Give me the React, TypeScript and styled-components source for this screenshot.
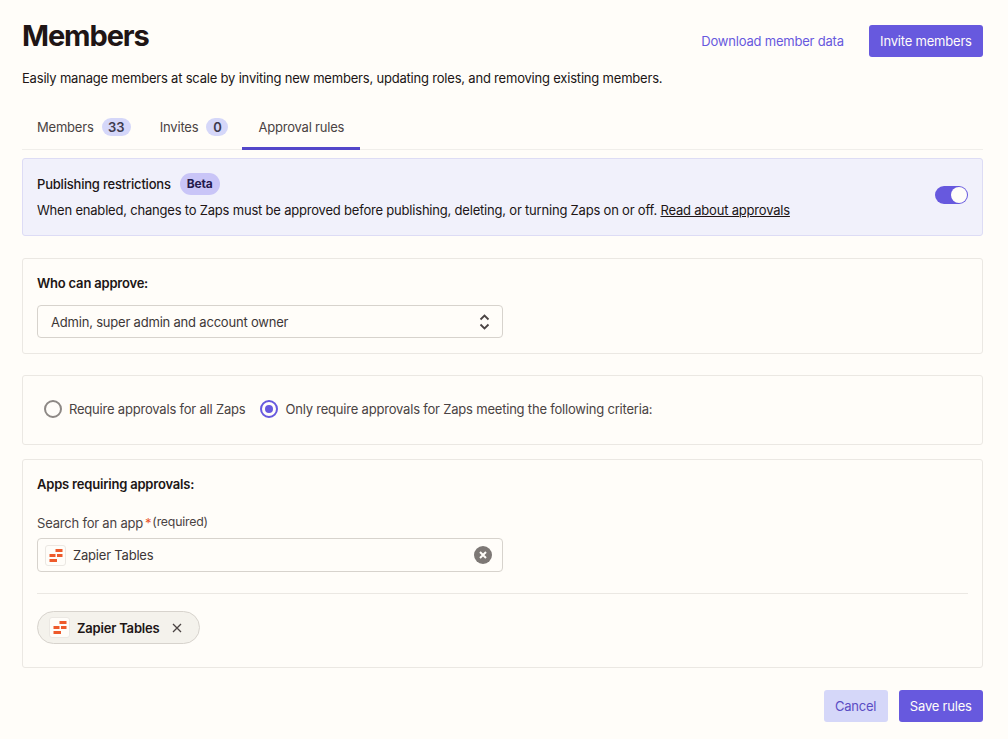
import React from 'react';
import styled, { createGlobalStyle } from 'styled-components';

const GlobalStyle = createGlobalStyle`
  html, body {
    margin: 0;
    padding: 0;
    background: #fffdf9;
  }
  body {
    font-family: Inter, "Liberation Sans", sans-serif;
    font-size: 13px;
    letter-spacing: -0.2px;
    color: #2d2e2e;
  }
  * {
    box-sizing: border-box;
  }
`;

const Page = styled.div`
  width: 1008px;
  height: 739px;
  overflow: hidden;
  padding: 0 25px 0 22px;
`;

const Header = styled.div`
  display: flex;
  justify-content: space-between;
  align-items: flex-start;
  height: 68px;
  padding-top: 20px;
`;

const Title = styled.h1`
  margin: 0;
  font-size: 29px;
  line-height: 32px;
  font-weight: 700;
  letter-spacing: -1.1px;
  color: #201515;
`;

const HeaderActions = styled.div`
  display: flex;
  align-items: center;
  gap: 25px;
  margin-top: 5px;
`;

const TextLink = styled.a`
  color: #6759de;
`;

const Button = styled.button<{ $secondary?: boolean }>`
  height: 32px;
  padding: 0 11.25px;
  border: 0;
  border-radius: 3px;
  font-family: inherit;
  font-size: 13px;
  letter-spacing: inherit;
  background: ${p => (p.$secondary ? '#d5d7f9' : '#6759de')};
  color: ${p => (p.$secondary ? '#5a4cc4' : '#fffdf9')};
`;

const Description = styled.p`
  margin: 0;
  line-height: 20px;
  color: #201515;
`;

const Tabs = styled.div`
  display: flex;
  height: 45px;
  margin-top: 17px;
  border-bottom: 1px solid #f0eeea;
`;

const Tab = styled.div<{ $active?: boolean }>`
  display: flex;
  align-items: center;
  gap: 8px;
  height: 45px;
  padding: 2px ${p => (p.$active ? '16px' : '14px')} 0 ${p => (p.$active ? '16px' : '15px')};
  color: #4a4343;
  border-bottom: 3px solid ${p => (p.$active ? '#5347c9' : 'transparent')};
`;

const Count = styled.span`
  display: inline-flex;
  align-items: center;
  justify-content: center;
  min-width: 22px;
  height: 18px;
  padding: 0 6.5px;
  border-radius: 9px;
  background: #d5d7f9;
  color: #3d3a4d;
  font-weight: 600;
`;

const Card = styled.section<{ $gap: number; $height: number }>`
  height: ${p => p.$height}px;
  margin-top: ${p => p.$gap}px;
  padding: 14px 14px 0;
  border: 1px solid #ebe8e3;
  border-radius: 3px;
`;

const Banner = styled.section`
  display: flex;
  align-items: center;
  justify-content: space-between;
  height: 78px;
  margin-top: 8px;
  padding: 0 14px 2px 14px;
  background: #f1f1fb;
  border: 1px solid #dddcf5;
  border-radius: 3px;
`;

const BannerTitleRow = styled.div`
  display: flex;
  align-items: center;
  gap: 9px;
  height: 22px;
  color: #201515;
  font-weight: 500;
`;

const BetaBadge = styled.span`
  display: inline-flex;
  align-items: center;
  height: 22px;
  padding: 0 7px;
  border-radius: 11px;
  background: #c9c5f7;
  color: #241a4d;
  font-size: 12px;
  font-weight: 700;
`;

const BannerText = styled.div`
  margin-top: 5px;
  line-height: 20px;
  color: #201515;

  a {
    color: inherit;
    text-decoration: underline;
  }
`;

const Toggle = styled.div`
  display: flex;
  align-items: center;
  justify-content: flex-end;
  width: 33px;
  height: 18px;
  margin-bottom: 2px;
  padding: 0 1px;
  border-radius: 9px;
  background: #6759de;
`;

const ToggleKnob = styled.div`
  width: 16px;
  height: 16px;
  border-radius: 50%;
  background: #fffdf9;
`;

const SectionLabel = styled.div`
  font-weight: 600;
  line-height: 20px;
  color: #201515;
`;

const Field = styled.div<{ $top: number; $height?: number; $left?: number }>`
  display: flex;
  align-items: center;
  justify-content: space-between;
  width: 466px;
  height: ${p => p.$height ?? 33}px;
  margin-top: ${p => p.$top}px;
  padding: 0 10px 0 ${p => p.$left ?? 13}px;
  border: 1px solid #d7d3cd;
  border-radius: 4px;
  color: #3d3737;
`;

const FieldValue = styled.div`
  display: flex;
  align-items: center;
  gap: 7px;
`;

const AppTile = styled.span`
  display: flex;
  align-items: center;
  justify-content: center;
  width: 21px;
  height: 21px;
  border: 1px solid #ebe8e3;
  border-radius: 3px;
  background: #fffdf9;
`;

const RadioCard = styled.section`
  display: flex;
  align-items: center;
  height: 70px;
  margin-top: 21px;
  padding: 0 0 2px 21px;
  border: 1px solid #ebe8e3;
  border-radius: 3px;
`;

const RadioItem = styled.label`
  display: flex;
  align-items: center;
  gap: 7px;
  margin-right: 15px;
  color: #4a4343;
`;

const RadioCircle = styled.span<{ $checked?: boolean }>`
  display: flex;
  align-items: center;
  justify-content: center;
  width: 18px;
  height: 18px;
  border-radius: 50%;
  border: 2px solid ${p => (p.$checked ? '#6759de' : '#8d8885')};

  &::after {
    content: '';
    display: ${p => (p.$checked ? 'block' : 'none')};
    width: 8px;
    height: 8px;
    border-radius: 50%;
    background: #6759de;
  }
`;

const FieldLabel = styled.div`
  display: flex;
  align-items: flex-start;
  height: 20px;
  margin-top: 19px;
  color: #4a4343;
  line-height: 20px;
`;

const Required = styled.span`
  color: #e8532b;
  margin-left: 2px;
  margin-right: 1px;
`;

const RequiredHint = styled.span`
  font-size: 12.3px;
  line-height: 17px;
`;

const Divider = styled.hr`
  margin: 21px 0 17px;
  border: 0;
  border-top: 1px solid #ebe8e3;
`;

const Chip = styled.div`
  display: inline-flex;
  align-items: center;
  gap: 7px;
  height: 33px;
  padding: 0 17px 0 11px;
  border: 1px solid #d7d3cd;
  border-radius: 17px;
  background: #f4f2ec;
  color: #201515;
  font-weight: 600;
`;

const ChipClose = styled.svg`
  margin-left: 6px;
`;

const Footer = styled.div`
  display: flex;
  justify-content: flex-end;
  gap: 11px;
  margin-top: 22px;
`;

function TablesLogo() {
  return (
    <svg width="14" height="13" viewBox="0 0 14 13" fill="#ee5a2b">
      <rect x="6.500" y="0" width="7" height="3" />
      <rect x="0.500" y="5" width="6" height="3" />
      <rect x="8" y="5" width="5.500" height="3" />
      <rect x="0.500" y="10" width="7.500" height="3" />
    </svg>
  );
}

export default function App() {
  return (
    <Page>
      <GlobalStyle />
      <Header>
        <Title>Members</Title>
        <HeaderActions>
          <TextLink>Download member data</TextLink>
          <Button>Invite members</Button>
        </HeaderActions>
      </Header>
      <Description>
        Easily manage members at scale by inviting new members, updating roles, and removing existing members.
      </Description>
      <Tabs>
        <Tab>Members <Count>33</Count></Tab>
        <Tab>Invites <Count>0</Count></Tab>
        <Tab $active>Approval rules</Tab>
      </Tabs>
      <Banner>
        <div>
          <BannerTitleRow>Publishing restrictions <BetaBadge>Beta</BetaBadge></BannerTitleRow>
          <BannerText>
            When enabled, changes to Zaps must be approved before publishing, deleting, or turning Zaps on or off.{' '}
            <a>Read about approvals</a>
          </BannerText>
        </div>
        <Toggle><ToggleKnob /></Toggle>
      </Banner>
      <Card $gap={22} $height={96}>
        <SectionLabel>Who can approve:</SectionLabel>
        <Field $top={12}>
          Admin, super admin and account owner
          <svg width="14" height="18" viewBox="0 0 14 18" fill="none" stroke="#4a4343" strokeWidth="1.8">
            <path d="M2.500 6.500 6.500 2.500l4 4M2.500 11.500l4 4 4-4" />
          </svg>
        </Field>
      </Card>
      <RadioCard>
        <RadioItem><RadioCircle />Require approvals for all Zaps</RadioItem>
        <RadioItem><RadioCircle $checked />Only require approvals for Zaps meeting the following criteria:</RadioItem>
      </RadioCard>
      <Card $gap={14} $height={209}>
        <SectionLabel>Apps requiring approvals:</SectionLabel>
        <FieldLabel>Search for an app<Required>*</Required><RequiredHint>(required)</RequiredHint></FieldLabel>
        <Field $top={5} $height={34} $left={7}>
          <FieldValue><AppTile><TablesLogo /></AppTile>Zapier Tables</FieldValue>
          <svg width="18" height="18" viewBox="0 0 18 18">
            <circle cx="9" cy="9" r="9" fill="#7d7875" />
            <path d="M6 6l6 6M12 6l-6 6" stroke="#fffdf9" strokeWidth="2" />
          </svg>
        </Field>
        <Divider />
        <Chip>
          <AppTile><TablesLogo /></AppTile>
          Zapier Tables
          <ChipClose width="10" height="10" viewBox="0 0 10 10" fill="none" stroke="#4a4343" strokeWidth="1.3">
            <path d="M1 1l8 8M9 1l-8 8" />
          </ChipClose>
        </Chip>
      </Card>
      <Footer>
        <Button $secondary>Cancel</Button>
        <Button>Save rules</Button>
      </Footer>
    </Page>
  );
}
